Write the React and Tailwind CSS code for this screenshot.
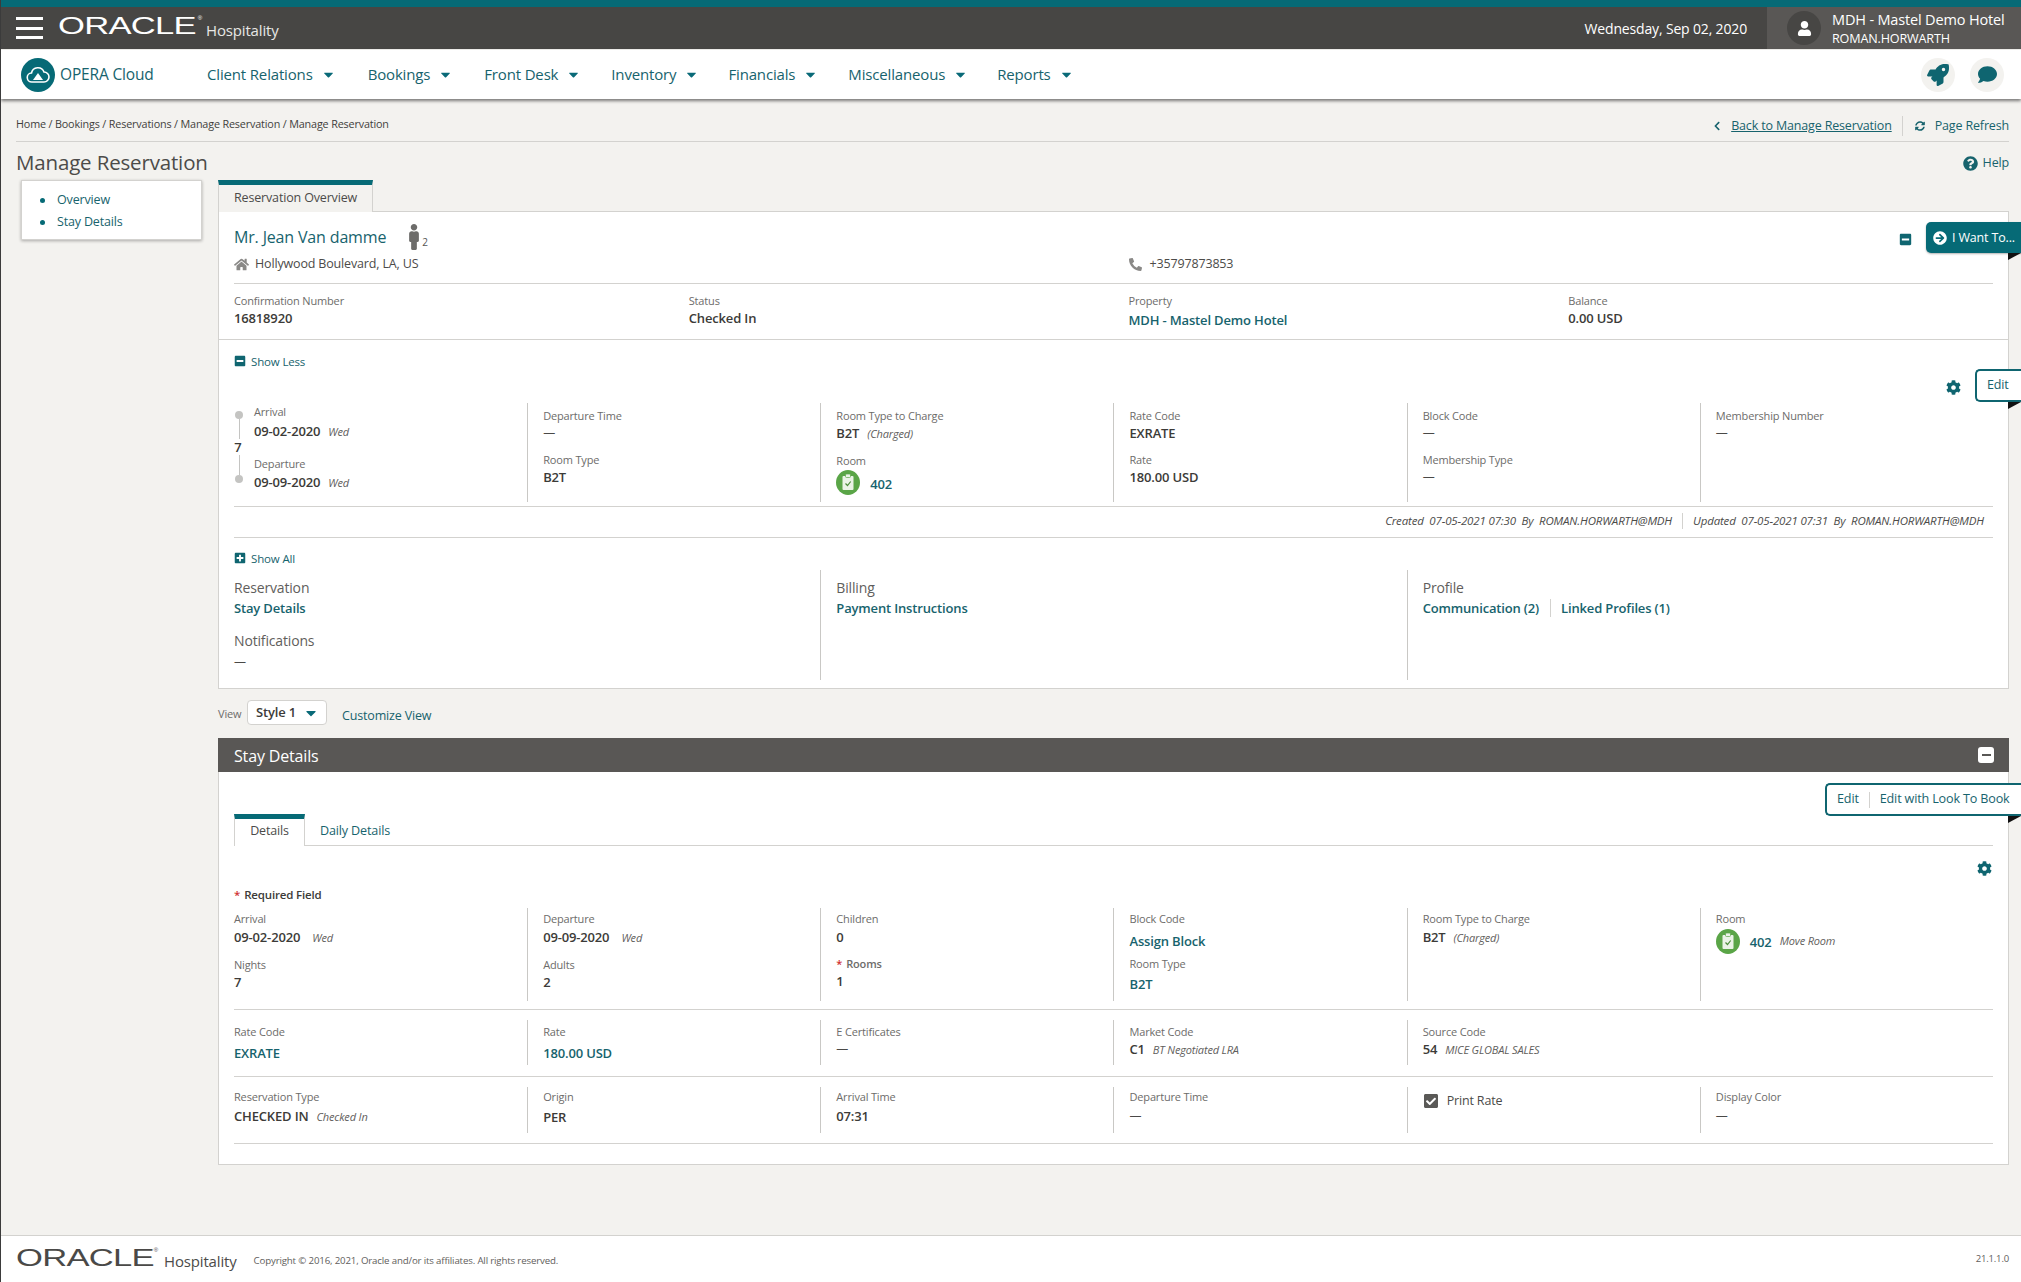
import React from "react";
import { FaRocket, FaComment, FaCog, FaSyncAlt, FaChevronLeft, FaQuestionCircle, FaArrowCircleRight, FaMinusSquare, FaPlusSquare, FaUser, FaMale, FaHome, FaPhoneAlt, FaCaretDown, FaCheckSquare } from "react-icons/fa";

const Label = ({ children, className = "" }) => <div className={`text-[11px] leading-[16px] tracking-[-0.015em] text-[#6d6c6a] ${className}`}>{children}</div>;
const Val = ({ children, teal, className = "" }) => <div className={`text-[13px] leading-[18px] font-semibold ${teal ? "text-[#17636d]" : "text-[#3c3b38]"} ${className}`}>{children}</div>;
const Note = ({ children, className = "" }) => <span className={`ml-2 text-[11px] italic font-normal text-[#5f5e5c] ${className}`}>{children}</span>;
const Dash = () => <div className="text-[12px] leading-[18px] text-[#4a4947]">—</div>;

const Cell = ({ first, children, className = "" }) => (
  <div className={`${first ? "" : "border-l border-[#c9c8c5] pl-[15px]"} ${className}`}>{children}</div>
);

const Room = () => (
  <svg width="24" height="25" viewBox="0 0 24 25" className="shrink-0">
    <ellipse cx="12" cy="12.5" rx="12" ry="12.5" fill="#5aa547" />
    <rect x="6.5" y="6" width="11" height="14" rx="1" fill="#eaf3e6" />
    <rect x="9.5" y="4" width="5" height="3.5" rx="1" fill="#eaf3e6" stroke="#5aa547" strokeWidth=".7" />
    <path d="M9.5 13.5l2 2 3.2-4" fill="none" stroke="#4b8c3a" strokeWidth="1.2" />
  </svg>
);

const Burger = () => (
  <div className="flex flex-col justify-between w-[27px] h-[22px]">
    <div className="h-[3px] bg-white" /><div className="h-[3px] bg-white" /><div className="h-[3px] bg-white" />
  </div>
);

const Notch = ({ className = "" }) => (
  <svg width="13" height="7" viewBox="0 0 13 7" className={`absolute right-0 ${className}`}><path d="M0 0h13L0 7z" fill="#111" /></svg>
);

const NavItem = ({ children, className = "" }) => (
  <div className={`flex items-center text-[15px] text-[#17636d] ${className}`}>
    {children}<FaCaretDown className="ml-[8px] text-[#0a6a78]" size={15} />
  </div>
);

const Wordmark = ({ color, w }) => (
  <div className={`relative font-['Liberation_Sans',sans-serif] ${color}`} style={{ width: w }}>
    <span className="block origin-left scale-x-[1.44] tracking-[-0.5px] font-normal" style={{ fontSize: 24, lineHeight: 1 }}>ORACLE</span>
    <span className="absolute right-[-5px] top-[1px] text-[6px] leading-none">®</span>
  </div>
);

export default function App() {
  return (
    <div className="min-h-[1282px] flex flex-col bg-[#f3f2ef] border-l border-[#3b3b3b] font-['Open_Sans',sans-serif] tracking-[-0.01em] overflow-hidden">
      <div className="h-[7px] bg-[#066a76] -ml-px" />
      <div className="h-[42px] bg-[#474644] flex items-center -ml-px">
        <div className="ml-[16px]"><Burger /></div>
        <div className="ml-[15px] mt-[-4px]"><Wordmark color="text-white" w={139} /></div>
        <div className="ml-[9px] mt-[4px] text-[15px] text-[#e8e8e6]">Hospitality</div>
        <div className="ml-auto text-[14px] text-white mr-[20px]">Wednesday, Sep 02, 2020</div>
        <div className="w-[254px] h-full bg-[#595755] flex items-center pl-[20px]">
          <div className="w-[34px] h-[34px] rounded-full bg-[#474644] flex items-center justify-center"><FaUser className="text-white" size={15} /></div>
          <div className="ml-[11px] text-white pt-[2px]">
            <div className="text-[14.5px] leading-[18px]">MDH - Mastel Demo Hotel</div>
            <div className="text-[12.6px] leading-[16px] mt-[2px]">ROMAN.HORWARTH</div>
          </div>
        </div>
      </div>
      <div className="mt-px h-[49px] bg-white shadow-[0_2px_3px_rgba(0,0,0,0.5)] flex items-center relative z-10">
        <div className="ml-[20px] w-[34px] h-[34px] rounded-full bg-[#066a76] flex items-center justify-center">
          <svg width="24" height="18" viewBox="0 0 24 18"><path d="M6 16a4.5 4.5 0 0 1-.5-9A6.5 6.5 0 0 1 18 6a5 5 0 0 1 0 10z" fill="none" stroke="#fff" strokeWidth="1.6" /><path d="M12 7l5 7H7z" fill="#fff" /></svg>
        </div>
        <div className="ml-[5px] w-[147px] text-[15.5px] text-[#17636d]">OPERA Cloud</div>
        <NavItem>Client Relations</NavItem>
        <NavItem className="ml-[32px]">Bookings</NavItem>
        <NavItem className="ml-[31px]">Front Desk</NavItem>
        <NavItem className="ml-[30px]">Inventory</NavItem>
        <NavItem className="ml-[29px]">Financials</NavItem>
        <NavItem className="ml-[30px]">Miscellaneous</NavItem>
        <NavItem className="ml-[29px]">Reports</NavItem>
        <div className="ml-auto mr-[17px] flex gap-[15px]">
          <div className="w-[34px] h-[34px] rounded-full bg-[#f3f2ef] flex items-center justify-center"><FaRocket className="text-[#0f6570]" size={22} /></div>
          <div className="w-[34px] h-[34px] rounded-full bg-[#f3f2ef] flex items-center justify-center"><FaComment className="text-[#0f6570]" size={19} /></div>
        </div>
      </div>

      <div className="ml-[15px] mr-[12px] h-[43px] border-b border-[#d3d2cf] flex items-end justify-between pb-[5px]">
        <div className="text-[10.8px] text-[#3f3e3c] leading-[16px] mb-[4px]">Home / Bookings / Reservations / Manage Reservation / Manage Reservation</div>
        <div className="flex items-center text-[12.5px] text-[#17636d] leading-[16px]">
          <FaChevronLeft size={10} className="mr-[9px]" />
          <span className="underline">Back to Manage Reservation</span>
          <span className="h-[20px] mx-[10px] border-l border-[#d3d2cf]" />
          <FaSyncAlt size={10} className="mr-[10px] ml-[2px]" />
          <span>Page Refresh</span>
        </div>
      </div>
      <div className="ml-[15px] mr-[12px] h-[38px] flex items-center justify-between">
        <div className="text-[20.5px] text-[#4c4b49] leading-[28px] mt-[2px]">Manage Reservation</div>
        <div className="flex items-center text-[12.5px] text-[#17636d] mt-[4px]"><FaQuestionCircle size={15} className="mr-[5px]" />Help</div>
      </div>

      <div className="flex items-start">
        <div className="ml-[20px] w-[181px] h-[60px] bg-white border border-[#d3d2cf] shadow-[0_1px_3px_rgba(0,0,0,0.3)] pt-[8px] pl-[18px] text-[12.5px] leading-[22px] text-[#17636d]">
          <div className="flex items-center"><span className="w-[5px] h-[5px] rounded-full bg-[#066a76] mr-[12px]" />Overview</div>
          <div className="flex items-center"><span className="w-[5px] h-[5px] rounded-full bg-[#066a76] mr-[12px]" />Stay Details</div>
        </div>
        <div className="ml-[16px] flex-1 mr-[12px] min-w-0">
          <div className="relative z-[1] w-[155px] h-[32px] border-t-[5px] border-x border-t-[#066a76] border-x-[#d3d2cf] bg-[#f3f2ef] text-[12.5px] leading-[26px] pl-[15px] text-[#4c4b49]">Reservation Overview</div>
          <div className="relative -mt-px h-[478px] bg-white border border-[#d3d2cf]">
            <div className="h-[71px] px-[15px] relative">
              <div className="flex items-center pt-[12px] h-[38px]">
                <span className="text-[16px] text-[#17636d]">Mr. Jean Van damme</span>
                <FaMale className="ml-[15px] text-[#6d6c6a]" size={26} />
                <span className="text-[10px] text-[#555] mt-[10px] -ml-[5px]">2</span>
              </div>
              <div className="grid grid-cols-2 mt-[5px] text-[12.5px] text-[#4c4b49] leading-[18px]">
                <div className="flex items-center"><FaHome size={15} className="text-[#8a8987] mr-[6px]" />Hollywood Boulevard, LA, US</div>
                <div className="flex items-center pl-[15px]"><FaPhoneAlt size={13} className="text-[#8a8987] mr-[8px]" />+35797873853</div>
              </div>
            </div>
            <div className="mx-[15px] border-t border-[#d3d2cf]" />
            <div className="h-[56px] px-[15px] grid grid-cols-4 pt-[9px] border-b border-[#d3d2cf]">
              <div><Label>Confirmation Number</Label><Val>16818920</Val></div>
              <div className="pl-[15px]"><Label>Status</Label><Val>Checked In</Val></div>
              <div className="pl-[15px]"><Label>Property</Label><Val teal className="mt-[2px]">MDH - Mastel Demo Hotel</Val></div>
              <div className="pl-[15px]"><Label>Balance</Label><Val>0.00 USD</Val></div>
            </div>
            <div className="px-[15px]">
              <div className="h-[63px] pt-[13px] flex items-start text-[11.5px] leading-[18px] text-[#17636d]"><FaMinusSquare size={12} className="mr-[5px] mt-[2px] text-[#0f6570]" />Show Less</div>
              <div className="grid grid-cols-6 h-[99px]">
                <div className="flex">
                  <div className="w-[20px] flex flex-col items-center -ml-[5px] pt-[8px] shrink-0">
                    <span className="w-[8px] h-[8px] rounded-full bg-[#c4c4c2]" />
                    <span className="w-px h-[20px] bg-[#c4c4c2]" />
                    <span className="text-[13px] leading-[16px] font-semibold text-[#3c3b38] -ml-[2px]">7</span>
                    <span className="w-px h-[20px] bg-[#c4c4c2]" />
                    <span className="w-[8px] h-[8px] rounded-full bg-[#c4c4c2]" />
                  </div>
                  <div className="pt-[1px] pl-[5px]">
                    <Label>Arrival</Label>
                    <Val className="mt-[2px]">09-02-2020<Note>Wed</Note></Val>
                    <Label className="mt-[15px]">Departure</Label>
                    <Val className="mt-[1px]">09-09-2020<Note>Wed</Note></Val>
                  </div>
                </div>
                <Cell className="pt-[5px]"><Label>Departure Time</Label><Dash /><Label className="mt-[10px]">Room Type</Label><Val>B2T</Val></Cell>
                <Cell className="pt-[5px]"><Label>Room Type to Charge</Label><Val>B2T<Note>(Charged)</Note></Val><Label className="mt-[10px]">Room</Label><div className="flex items-center mt-[1px]"><Room /><Val teal className="ml-[10px] mt-[2px]">402</Val></div></Cell>
                <Cell className="pt-[5px]"><Label>Rate Code</Label><Val>EXRATE</Val><Label className="mt-[10px]">Rate</Label><Val>180.00 USD</Val></Cell>
                <Cell className="pt-[5px]"><Label>Block Code</Label><Dash /><Label className="mt-[10px]">Membership Type</Label><Dash /></Cell>
                <Cell className="pt-[5px]"><Label>Membership Number</Label><Dash /></Cell>
              </div>
              <div className="mt-[4px] border-y border-[#d3d2cf] h-[32px] flex items-center justify-end pr-[9px] pb-[3px] text-[11.5px] italic text-[#4c4b49]">
                <span>Created&nbsp; 07-05-2021 07:30&nbsp; By&nbsp; ROMAN.HORWARTH@MDH</span>
                <span className="h-[16px] border-l border-[#d3d2cf] mx-[10px]" />
                <span>Updated&nbsp; 07-05-2021 07:31&nbsp; By&nbsp; ROMAN.HORWARTH@MDH</span>
              </div>
              <div className="h-[32px] pt-[12px] flex items-start text-[11.5px] leading-[18px] text-[#17636d]"><FaPlusSquare size={12} className="mr-[5px] mt-[2px] text-[#0f6570]" />Show All</div>
              <div className="grid grid-cols-6 h-[110px]">
                <div className="col-span-2 pt-[9px]">
                  <div className="text-[14px] leading-[18px] text-[#5f5e5c]">Reservation</div>
                  <Val teal className="mt-[2px]">Stay Details</Val>
                  <div className="mt-[15px] text-[14px] leading-[18px] text-[#5f5e5c]">Notifications</div>
                  <div className="mt-[3px]"><Dash /></div>
                </div>
                <Cell className="col-span-2 pt-[9px]">
                  <div className="text-[14px] leading-[18px] text-[#5f5e5c]">Billing</div>
                  <Val teal className="mt-[2px]">Payment Instructions</Val>
                </Cell>
                <Cell className="col-span-2 pt-[9px]">
                  <div className="text-[14px] leading-[18px] text-[#5f5e5c]">Profile</div>
                  <div className="flex mt-[2px]">
                    <Val teal>Communication (2)</Val>
                    <div className="ml-[11px] pl-[10px] border-l border-[#d3d2cf]"><Val teal>Linked Profiles (1)</Val></div>
                  </div>
                </Cell>
              </div>
            </div>

            <div className="absolute right-[-13px] top-[10px] w-[95px] h-[31px] bg-[#066a76] rounded-l-[5px] flex items-center pl-[7px] pt-[1px] text-[12.5px] text-white shadow-[0_1px_2px_rgba(0,0,0,0.3)]">
              <FaArrowCircleRight size={14} className="mr-[5px]" />I Want To...
            </div>
            <Notch className="!right-[-13px] top-[41px]" />
            <FaMinusSquare size={13} className="absolute right-[96px] top-[21px] text-[#0f6570]" />
            <div className="absolute right-[-13px] top-[157px] w-[46px] h-[33px] bg-white border-2 border-r-0 border-[#0f6570] rounded-l-[5px] flex items-center pl-[10px] pb-px text-[12.5px] text-[#17636d]">Edit</div>
            <Notch className="!right-[-13px] top-[190px]" />
            <FaCog size={15} className="absolute right-[47px] top-[168px] text-[#0f6570]" />
          </div>

          <div className="h-[49px] flex items-center">
            <span className="text-[11px] text-[#6d6c6a] w-[29px] mt-[1px]">View</span>
            <div className="w-[80px] h-[25px] bg-white border border-[#d3d2cf] rounded-[4px] flex items-center pl-[8px] text-[13px] font-semibold text-[#3c3b38] mt-[-2px]">Style 1<FaCaretDown size={16} className="ml-[7px] text-[#0a6a78]" /></div>
            <span className="ml-[15px] text-[12.5px] text-[#17636d] mt-[6px]">Customize View</span>
          </div>

          <div className="relative bg-white border border-[#d3d2cf] h-[427px]">
            <div className="h-[34px] bg-[#595755] flex items-center justify-between text-[16px] text-white -mx-px -mt-px pl-[16px] pr-[15px]">
              <span className="mt-[2px]">Stay Details</span>
              <span className="w-[16px] h-[16px] bg-white rounded-[3px] flex items-center justify-center"><span className="w-[9px] h-[2px] bg-[#595755]" /></span>
            </div>
            <div className="px-[15px]">
              <div className="mt-[42px] h-[32px] border-b border-[#d3d2cf] flex">
                <div className="w-[71px] h-[32px] border-t-[5px] border-x border-t-[#066a76] border-x-[#d3d2cf] bg-white text-[12.5px] leading-[24px] text-center text-[#4c4b49]">Details</div>
                <div className="ml-[15px] text-[12.6px] leading-[34px] text-[#17636d]">Daily Details</div>
              </div>
              <div className="h-[62px] pt-[41px] text-[11.5px] leading-[16px] font-semibold text-[#3c3b38]"><span className="text-[#d03030] mr-[4px]">*</span>Required Field</div>
              <div className="grid grid-cols-6 h-[93px]">
                <div className="pt-[3px]"><Label>Arrival</Label><Val className="mt-px">09-02-2020<Note className="!ml-3">Wed</Note></Val><Label className="mt-[10px]">Nights</Label><Val>7</Val></div>
                <Cell className="pt-[3px]"><Label>Departure</Label><Val className="mt-px">09-09-2020<Note className="!ml-3">Wed</Note></Val><Label className="mt-[10px]">Adults</Label><Val>2</Val></Cell>
                <Cell className="pt-[3px]"><Label>Children</Label><Val className="mt-px">0</Val><Label className="mt-[10px] font-semibold"><span className="text-[#d03030] mr-[4px]">*</span>Rooms</Label><Val>1</Val></Cell>
                <Cell className="pt-[3px]"><Label>Block Code</Label><Val teal className="mt-[5px]">Assign Block</Val><Label className="mt-[6px]">Room Type</Label><Val teal className="mt-[3px]">B2T</Val></Cell>
                <Cell className="pt-[3px]"><Label>Room Type to Charge</Label><Val className="mt-px">B2T<Note>(Charged)</Note></Val></Cell>
                <Cell className="pt-[3px]"><Label>Room</Label><div className="flex items-center mt-[2px]"><Room /><Val teal className="ml-[10px]">402</Val><Note>Move Room</Note></div></Cell>
              </div>
              <div className="mt-[8px] border-t border-[#d3d2cf] pt-[10px] pb-[11px]">
                <div className="grid grid-cols-6 h-[45px]">
                  <div className="pt-[4px]"><Label>Rate Code</Label><Val teal className="mt-[4px]">EXRATE</Val></div>
                  <Cell className="pt-[4px]"><Label>Rate</Label><Val teal className="mt-[4px]">180.00 USD</Val></Cell>
                  <Cell className="pt-[4px]"><Label>E Certificates</Label><Dash /></Cell>
                  <Cell className="pt-[4px]"><Label>Market Code</Label><Val>C1<Note>BT Negotiated LRA</Note></Val></Cell>
                  <Cell className="pt-[4px]"><Label>Source Code</Label><Val>54<Note>MICE GLOBAL SALES</Note></Val></Cell>
                  <div />
                </div>
              </div>
              <div className="border-t border-[#d3d2cf] pt-[10px] pb-[10px]">
                <div className="grid grid-cols-6 h-[46px]">
                  <div className="pt-[2px]"><Label>Reservation Type</Label><Val className="mt-[2px]">CHECKED IN<Note>Checked In</Note></Val></div>
                  <Cell className="pt-[2px]"><Label>Origin</Label><Val className="mt-[3px]">PER</Val></Cell>
                  <Cell className="pt-[2px]"><Label>Arrival Time</Label><Val className="mt-[2px]">07:31</Val></Cell>
                  <Cell className="pt-[2px]"><Label>Departure Time</Label><div className="mt-[2px]"><Dash /></div></Cell>
                  <Cell className="pt-[3px]"><div className="flex items-center mt-[2px] text-[12.5px] text-[#4c4b49]"><FaCheckSquare size={16} className="mr-[8px] text-[#5a5957]" />Print Rate</div></Cell>
                  <Cell className="pt-[2px]"><Label>Display Color</Label><div className="mt-[2px]"><Dash /></div></Cell>
                </div>
              </div>
              <div className="border-t border-[#d3d2cf]" />
            </div>
            <div className="absolute right-[-13px] top-[44px] w-[196px] h-[33px] bg-white border-2 border-r-0 border-[#0f6570] rounded-l-[5px] flex items-center pl-[10px] text-[12.6px] text-[#17636d]">
              <span>Edit</span><span className="h-[16px] border-l border-[#d3d2cf] mx-[10px]" /><span>Edit with Look To Book</span>
            </div>
            <Notch className="!right-[-13px] top-[77px]" />
            <FaCog size={15} className="absolute right-[16px] top-[122px] text-[#0f6570]" />
          </div>
        </div>
      </div>

      <div className="mt-auto h-[47px] bg-white border-t border-[#d3d2cf] flex items-center pl-[15px] pr-[12px]">
        <div className="mt-[-2px]"><Wordmark color="text-[#4a4947]" w={137} /></div>
        <div className="ml-[11px] text-[15px] text-[#4c4b49] mt-[4px]">Hospitality</div>
        <div className="ml-[17px] text-[9.7px] text-[#5f5e5c] mt-[4px]">Copyright © 2016, 2021, Oracle and/or its affiliates. All rights reserved.</div>
        <div className="ml-auto text-[9.5px] text-[#5f5e5c]">21.1.1.0</div>
      </div>
    </div>
  );
}
